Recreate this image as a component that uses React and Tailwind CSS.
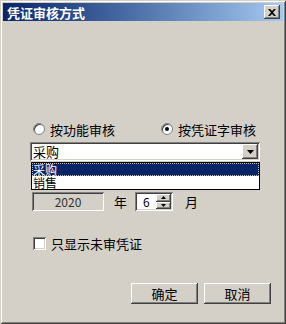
import React from "react";

const font = { fontFamily: '"Noto Sans CJK SC", "Noto Sans", sans-serif' };

// classic 3D bevels
const sunken = "shadow-[inset_1px_1px_#808080,inset_-1px_-1px_#fff,inset_2px_2px_#404040,inset_-2px_-2px_#d4d0c8]";
const raised = "shadow-[inset_-1px_-1px_#404040,inset_1px_1px_#fff,inset_-2px_-2px_#808080]";

function Radio({ checked, label }) {
  return (
    <div className="flex items-center gap-[5px]">
      <div className="relative w-[12px] h-[12px] rounded-full bg-white border border-[#808080] shadow-[inset_1px_1px_#404040]">
        {checked && <div className="absolute left-[3px] top-[3px] w-[4px] h-[4px] rounded-full bg-black" />}
      </div>
      <span className="text-[13px] leading-none text-black">{label}</span>
    </div>
  );
}

export default function App() {
  return (
    <div
      className="w-[286px] h-[324px] bg-[#d4d0c8] shadow-[inset_1px_1px_#d4d0c8,inset_-1px_-1px_#404040,inset_2px_2px_#fff,inset_-2px_-2px_#808080] flex flex-col overflow-hidden"
      style={font}
    >
      {/* title bar */}
      <div className="mx-[3px] mt-[3px] h-[18px] bg-gradient-to-r from-[#0a246a] to-[#a6caf0] flex items-center justify-between pl-[4px] pr-[3px]">
        <span className="text-white font-bold text-[13px] leading-none">凭证审核方式</span>
        <div className={`w-[16px] h-[14px] bg-[#d4d0c8] ${raised} flex items-center justify-center`}>
          <svg width="8" height="7" viewBox="0 0 8 7">
            <path d="M0 0h2l2 2 2-2h2L5 3.5 8 7H6L4 5 2 7H0l3-3.5z" fill="#000" />
          </svg>
        </div>
      </div>

      <div className="flex flex-col pl-[30px] pr-[26px] pt-[101px]">
        {/* radio row */}
        <div className="flex items-center justify-between pl-[3px] pr-[4px] h-[14px]">
          <Radio label="按功能审核" />
          <Radio checked label="按凭证字审核" />
        </div>

        {/* combo */}
        <div className="relative mt-[6px]">
          <div className={`h-[19px] bg-white ${sunken} flex items-center pl-[3px] pr-[2px]`}>
            <span className="flex-1 text-[13px] leading-none text-black">采购</span>
            <div className={`w-[16px] h-[15px] bg-[#d4d0c8] ${raised} flex items-center justify-center`}>
              <svg width="7" height="4" viewBox="0 0 7 4">
                <path d="M0 0h7L3.5 4z" fill="#000" />
              </svg>
            </div>
          </div>

          {/* label hidden behind dropdown list */}
          <div className="mt-[8px] pl-[2px] text-[12px] leading-none text-black">会计期间选择：年度月份</div>

          {/* dropdown list */}
          <div className="absolute left-[1px] right-0 top-[20px] bg-white border border-black text-[12px] leading-[13px]">
            <div className="h-[13px] bg-[#0a246a] text-white px-[1px] outline-1 outline-dotted outline-[#c0c0c0] -outline-offset-1">采购</div>
            <div className="h-[13px] text-black px-[1px]">销售</div>
          </div>
        </div>

        {/* period row */}
        <div className="flex items-center mt-[11px] pl-[2px] h-[19px]">
          <div className={`w-[72px] h-[19px] bg-[#d4d0c8] ${sunken} flex items-center justify-center text-[12px] text-[#303030]`}>
            2020
          </div>
          <span className="ml-[10px] text-[13px] text-black">年</span>
          <div className={`ml-[8px] w-[38px] h-[19px] bg-white ${sunken} flex items-center pl-[8px] pr-[2px]`}>
            <span className="flex-1 text-[12px] text-black leading-none">6</span>
            <div className="flex flex-col w-[15px] h-[15px]">
              <div className={`flex-1 bg-[#d4d0c8] ${raised} flex items-center justify-center`}>
                <svg width="5" height="3" viewBox="0 0 5 3"><path d="M2.5 0L5 3H0z" fill="#000" /></svg>
              </div>
              <div className={`flex-1 bg-[#d4d0c8] ${raised} flex items-center justify-center`}>
                <svg width="5" height="3" viewBox="0 0 5 3"><path d="M0 0h5L2.5 3z" fill="#000" /></svg>
              </div>
            </div>
          </div>
          <span className="ml-[12px] text-[13px] text-black">月</span>
        </div>

        {/* checkbox */}
        <div className="flex items-center gap-[5px] mt-[26px] pl-[3px]">
          <div className={`w-[13px] h-[13px] bg-white ${sunken}`} />
          <span className="text-[13px] leading-none text-black">只显示未审凭证</span>
        </div>
      </div>

      {/* buttons */}
      <div className="flex justify-end gap-[6px] pr-[15px] mt-[33px]">
        <button className={`w-[67px] h-[21px] bg-[#d4d0c8] ${raised} text-[13px] text-black leading-none`}>确定</button>
        <button className={`w-[67px] h-[21px] bg-[#d4d0c8] ${raised} text-[13px] text-black leading-none`}>取消</button>
      </div>
    </div>
  );
}
